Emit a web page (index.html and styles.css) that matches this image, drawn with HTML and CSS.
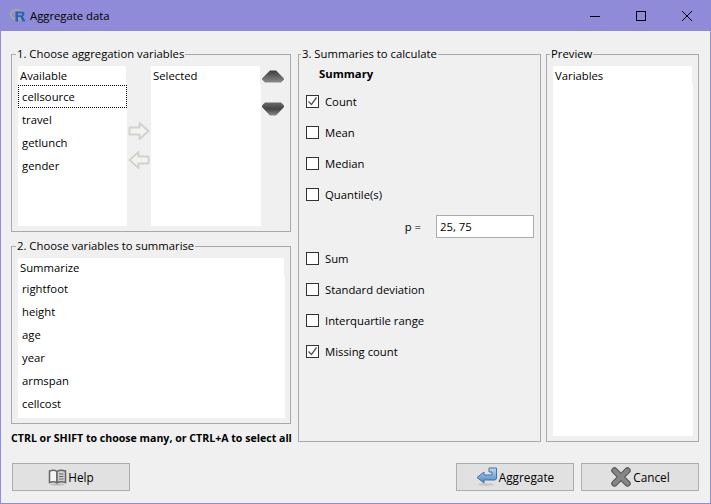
FILE: index.html
```html
<!DOCTYPE html>
<html lang="en">

<head>
    <meta charset="UTF-8">
    <meta name="viewport" content="width=device-width, initial-scale=1.0">
    <title>Aggregate data</title>
    <link rel="stylesheet" href="styles.css">
</head>

<body>
    <div class="window">
        <div class="titlebar">
            <svg class="r-logo" width="18" height="15" viewBox="0 0 18 15">
                <ellipse cx="8" cy="6.500" rx="6.500" ry="4.500" fill="none" stroke="#9ea3ad" stroke-width="2.500" />
                <path d="M6.500 3.500h6.500a2.600 2.600 0 0 1 1 5l2.500 5h-3l-2-4.500H9v4.500H6.500z" fill="#2a62b0" />
                <path d="M9 5.300v2h3.300a1 1 0 0 0 0-2z" fill="#8f8bd8" />
            </svg>
            <span class="title-text">Aggregate data</span>
            <div class="win-controls">
                <svg width="46" height="30" viewBox="0 0 46 30"><path d="M18 15.500h10" stroke="#000" /></svg>
                <svg width="46" height="30" viewBox="0 0 46 30"><rect x="18.500" y="10.500" width="9" height="9" fill="none" stroke="#000" /></svg>
                <svg width="46" height="30" viewBox="0 0 46 30"><path d="M18 10l10 10M28 10l-10 10" stroke="#000" /></svg>
            </div>
        </div>

        <div class="content">
            <div class="panels">
                <div class="left-col">
                    <fieldset class="group group-agg">
                        <legend>1. Choose aggregation variables</legend>
                        <div class="agg-row">
                            <div class="listbox list-available">
                                <div class="list-head">Available</div>
                                <div class="list-item focused">cellsource</div>
                                <div class="list-item">travel</div>
                                <div class="list-item">getlunch</div>
                                <div class="list-item">gender</div>
                            </div>
                            <div class="move-btns">
                                <svg width="22" height="20" viewBox="0 0 22 20"><path d="M1.500 6.500h10V2l9 8-9 8v-4.500h-10z" fill="#f3f3ee" stroke="#d2d2ce" stroke-width="2" stroke-linejoin="round" /></svg>
                                <svg width="22" height="20" viewBox="0 0 22 20"><path d="M20.500 6.500h-10V2l-9 8 9 8v-4.500h10z" fill="#f3f3ee" stroke="#d2d2ce" stroke-width="2" stroke-linejoin="round" /></svg>
                            </div>
                            <div class="listbox list-selected">
                                <div class="list-head">Selected</div>
                            </div>
                            <div class="order-btns">
                                <svg width="22" height="14" viewBox="0 0 22 14"><defs><linearGradient id="up" x1="0" y1="0" x2="0" y2="1"><stop offset="0" stop-color="#3c3c3c" /><stop offset="1" stop-color="#8a8a8a" /></linearGradient></defs><path d="M8 .5h6l8 8v1l-3 3H3l-3-3v-1z" fill="url(#up)" /></svg>
                                <svg width="22" height="14" viewBox="0 0 22 14"><defs><linearGradient id="down" x1="0" y1="0" x2="0" y2="1"><stop offset="0" stop-color="#6a6a6a" /><stop offset=".5" stop-color="#444" /><stop offset="1" stop-color="#8a8a8a" /></linearGradient></defs><path d="M3 .5h16l3 3v1.500l-8 8.500H8L0 5V3.500z" fill="url(#down)" /></svg>
                            </div>
                        </div>
                    </fieldset>

                    <fieldset class="group group-sum">
                        <legend>2. Choose variables to summarise</legend>
                        <div class="listbox list-summarize">
                            <div class="list-head">Summarize</div>
                            <div class="list-item">rightfoot</div>
                            <div class="list-item">height</div>
                            <div class="list-item">age</div>
                            <div class="list-item">year</div>
                            <div class="list-item">armspan</div>
                            <div class="list-item">cellcost</div>
                        </div>
                    </fieldset>
                    <div class="hint">CTRL or SHIFT to choose many, or CTRL+A to select all</div>
                </div>

                <fieldset class="group group-calc">
                    <legend>3. Summaries to calculate</legend>
                    <div class="calc-head">Summary</div>
                    <div class="check-row"><span class="checkbox"><svg width="11" height="11" viewBox="0 0 11 11"><path d="M1.500 5.500l3 3 5-7" fill="none" stroke="#555" stroke-width="1.300" /></svg></span>Count</div>
                    <div class="check-row"><span class="checkbox"></span>Mean</div>
                    <div class="check-row"><span class="checkbox"></span>Median</div>
                    <div class="check-row"><span class="checkbox"></span>Quantile(s)</div>
                    <div class="p-row">
                        <span>p =</span>
                        <input class="p-input" type="text" value="25, 75">
                    </div>
                    <div class="check-row"><span class="checkbox"></span>Sum</div>
                    <div class="check-row"><span class="checkbox"></span>Standard deviation</div>
                    <div class="check-row"><span class="checkbox"></span>Interquartile range</div>
                    <div class="check-row"><span class="checkbox"><svg width="11" height="11" viewBox="0 0 11 11"><path d="M1.500 5.500l3 3 5-7" fill="none" stroke="#555" stroke-width="1.300" /></svg></span>Missing count</div>
                </fieldset>

                <fieldset class="group group-preview">
                    <legend>Preview</legend>
                    <div class="listbox list-preview">
                        <div class="list-head">Variables</div>
                    </div>
                </fieldset>
            </div>

            <div class="footer">
                <button class="btn">
                    <svg width="19" height="18" viewBox="0 0 19 18">
                        <path d="M9 3.500C7 2 4 2 1.500 3v11.500C4 13.500 7 13.500 9 15z" fill="#f4f4f4" stroke="#666" stroke-width="1.500" />
                        <path d="M9 3.500C11 2 14.500 2 17.500 3v11.500C14.500 13.500 11 13.500 9 15z" fill="#cfcfcf" stroke="#666" stroke-width="1.500" />
                        <path d="M11 6h4.500M11 8.500h4.500M11 11h4.500" stroke="#666" />
                        <ellipse cx="9.500" cy="16.500" rx="7" ry="1" fill="#bbb" />
                    </svg>
                    Help
                </button>
                <div class="footer-right">
                    <button class="btn">
                        <svg width="22" height="20" viewBox="0 0 22 20">
                            <defs><linearGradient id="blue" x1="0" y1="0" x2="0" y2="1"><stop offset="0" stop-color="#c2d8ee" /><stop offset="1" stop-color="#4a86c5" /></linearGradient></defs>
                            <ellipse cx="10" cy="17.500" rx="8" ry="1.500" fill="#c8c8c8" />
                            <path d="M13 1h7.500v10a2 2 0 0 1-2 2H8v3L1 10.500 8 5v3h8V5h-3z" fill="url(#blue)" stroke="#3f75ad" />
                        </svg>
                        Aggregate
                    </button>
                    <button class="btn">
                        <svg width="22" height="20" viewBox="0 0 22 20">
                            <path d="M4.500 3.500l13 13M17.500 3.500l-13 13" stroke="#5c5c5c" stroke-width="6.500" stroke-linecap="round" />
                            <path d="M4.500 3.500l13 13M17.500 3.500l-13 13" stroke="#868686" stroke-width="4" stroke-linecap="round" />
                        </svg>
                        Cancel
                    </button>
                </div>
            </div>
        </div>
    </div>
</body>

</html>
```

FILE: styles.css
```css
* {
    box-sizing: border-box;
}

html,
body {
    margin: 0;
    height: 100%;
}

body {
    font-family: "Open Sans", "Noto Sans", sans-serif;
    font-size: 11.300px;
    color: #000;
}

.window {
    width: 711px;
    height: 504px;
    display: flex;
    flex-direction: column;
    background-color: #f0f0f0;
    border: 1px solid #8f8bd8;
    border-top: none;
}

.titlebar {
    height: 31px;
    display: flex;
    align-items: center;
    background-color: #8f8bd8;
    padding-left: 8px;
}

.r-logo {
    margin-right: 3px;
}

.title-text {
    flex: 1;
}

.win-controls {
    display: flex;
}

.win-controls svg {
    display: block;
}

.content {
    flex: 1;
    display: flex;
    flex-direction: column;
    padding: 15px 11px 11px 10px;
}

.panels {
    display: flex;
    gap: 7px;
}

.left-col {
    width: 280px;
}

/* group boxes */
.group {
    margin: 0;
    padding: 3px 5px 0 6px;
    border: 1px solid #a9a9a9;
    min-width: 0;
}

.group legend {
    padding: 0 1px 1px;
    margin-left: -2px;
    line-height: 16px;
}

.group-agg {
    height: 186px;
}

.group-sum {
    margin-top: 6px;
    height: 186px;
}

.group-calc {
    width: 243px;
    height: 396px;
    padding: 0 6px 0 7px;
}

.group-calc legend {
    margin-left: -5px;
}

.group-preview {
    width: 153px;
    height: 396px;
    margin-left: -2px;
}

.group-preview legend {
    margin-left: -3px;
}

.hint {
    font-weight: bold;
    font-size: 10.600px;
    margin-top: 7px;
    white-space: nowrap;
}

/* lists */
.listbox {
    background-color: #fff;
}

.list-head {
    height: 19px;
    line-height: 19px;
    padding-left: 2px;
    border-right: 1px solid #f0f0f0;
}

.list-item {
    height: 23px;
    line-height: 23px;
    padding-left: 4px;
}

.list-item.focused {
    border: 1px dotted #000;
    line-height: 21px;
    padding-left: 3px;
}

.agg-row {
    display: flex;
    height: 160px;
}

.list-available {
    width: 109px;
}

.list-selected {
    width: 110px;
}

.move-btns {
    width: 24px;
    display: flex;
    flex-direction: column;
    align-items: center;
    gap: 9px;
    padding-top: 55px;
}

.order-btns {
    display: flex;
    flex-direction: column;
    gap: 18px;
    padding: 4px 0 0 1px;
}

.list-summarize {
    height: 160px;
}

.list-preview {
    height: 370px;
}

/* summaries */
.calc-head {
    font-weight: bold;
    padding-left: 13px;
    height: 23px;
    line-height: 22px;
}

.check-row {
    display: flex;
    align-items: center;
    height: 31px;
}

.checkbox {
    width: 13px;
    height: 13px;
    border: 1px solid #333;
    background-color: #fff;
    margin-right: 6px;
    display: flex;
    align-items: center;
    justify-content: center;
}

.p-row {
    display: flex;
    align-items: center;
    justify-content: flex-end;
    gap: 15px;
    height: 33px;
}

.p-input {
    width: 98px;
    height: 23px;
    font: inherit;
    border: 1px solid #acacac;
    padding: 0 3px;
    background-color: #fff;
}

/* bottom buttons */
.footer {
    display: flex;
    justify-content: space-between;
    margin-top: 18px;
    padding-left: 1px;
}

.footer-right {
    display: flex;
    gap: 7px;
}

.btn {
    width: 118px;
    height: 28px;
    display: flex;
    align-items: center;
    justify-content: center;
    gap: 1px;
    font: inherit;
    font-size: 11.800px;
    color: #000;
    background-color: #e1e1e1;
    border: 1px solid #adadad;
    padding: 0;
}
```
